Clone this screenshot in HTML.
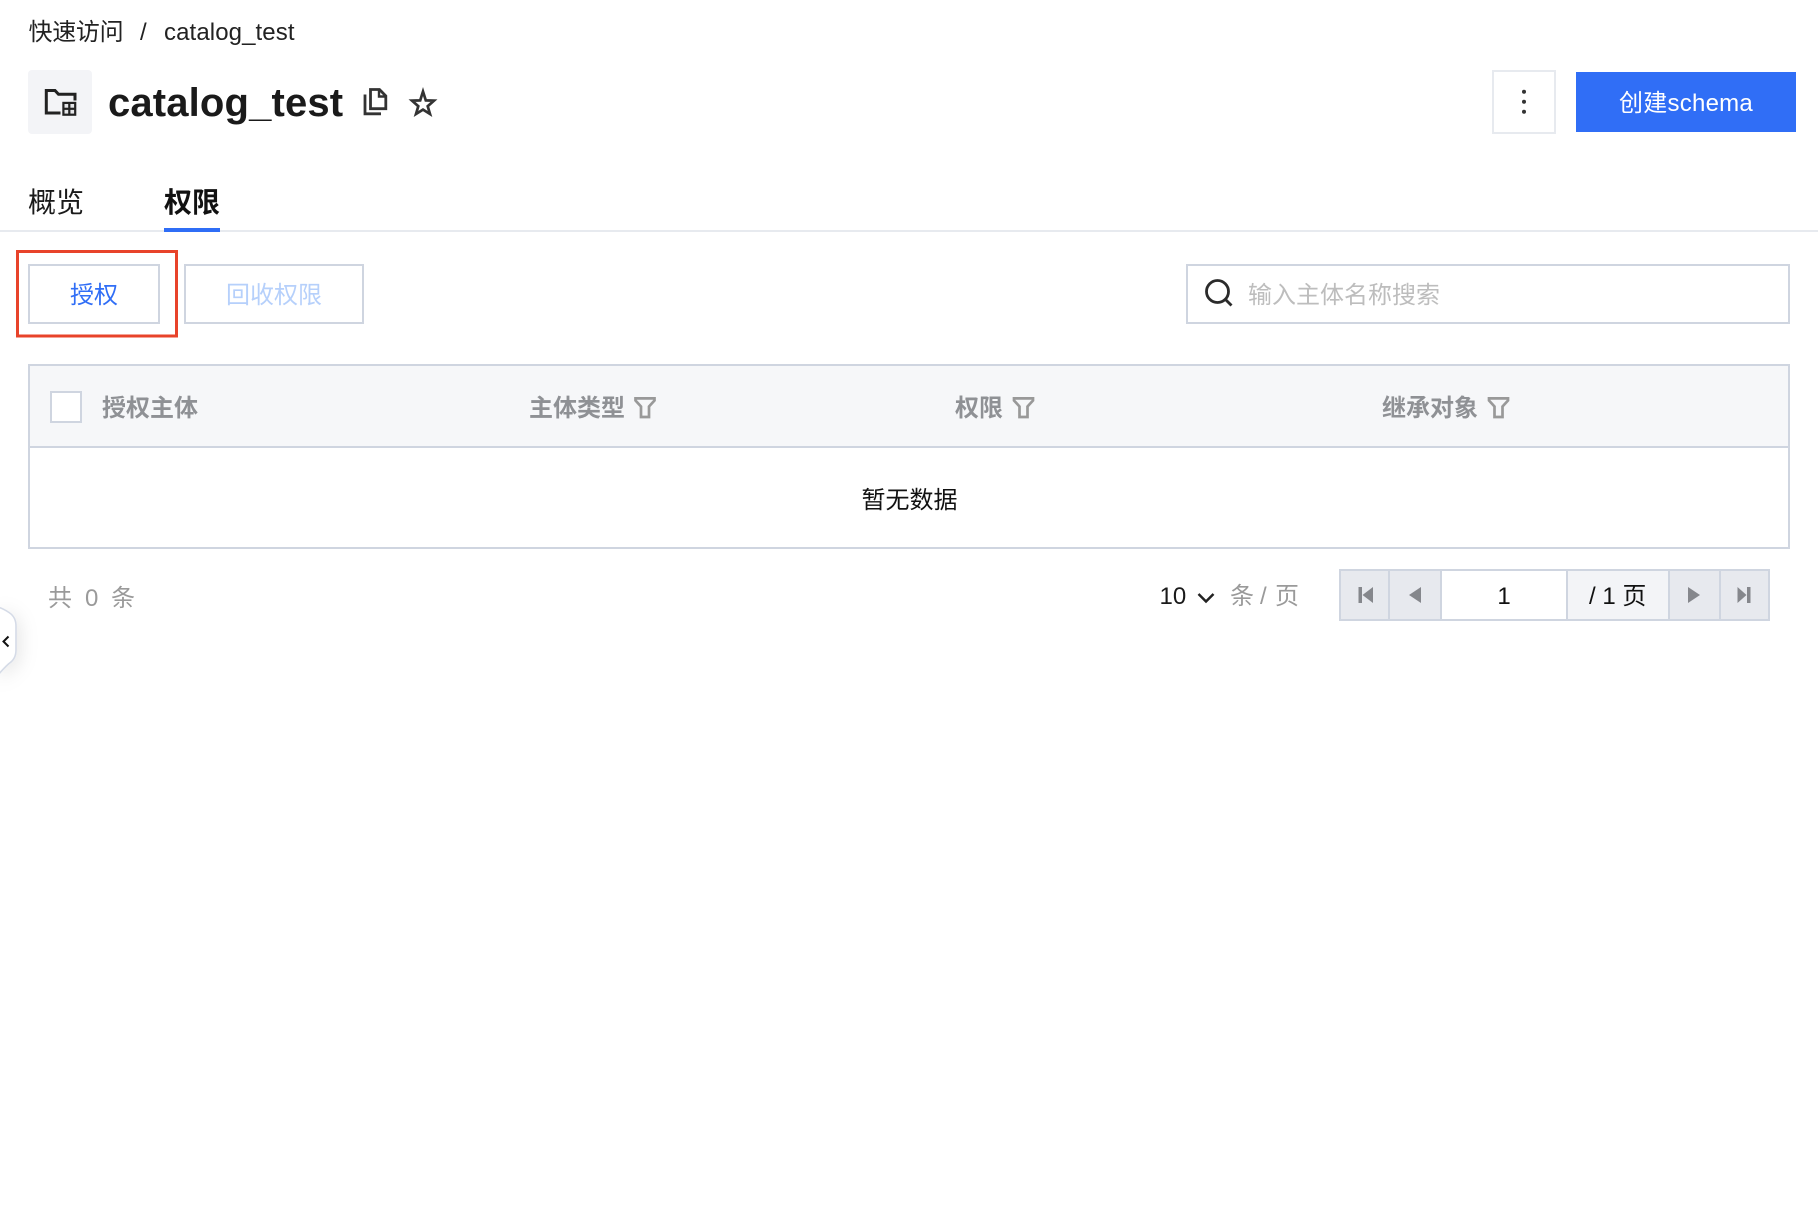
<!DOCTYPE html>
<html lang="zh-CN">
<head>
<meta charset="utf-8">
<title>catalog_test</title>
<style>
html,body{margin:0;padding:0;background:#fff;}
body{width:1818px;height:1232px;position:relative;overflow:hidden;font-family:"Liberation Sans","Noto Sans CJK SC",sans-serif;font-size:24px;color:#1a1a1a;}
.a{position:absolute;box-sizing:border-box;}
.t{position:absolute;white-space:nowrap;line-height:32px;height:32px;}
.b{font-weight:700;}
.g{color:#8f9195;}
.c{text-align:center;}
svg{position:absolute;overflow:visible;display:block;left:0;top:0;}
</style>
</head>
<body>
<!-- breadcrumb -->
<div class="t" style="left:28.5px;top:17px;color:#222;letter-spacing:-.3px;">快速访问</div>
<div class="t" style="left:140px;top:17px;color:#222;">/</div>
<div class="t" style="left:164px;top:17px;color:#222;letter-spacing:.1px;">catalog_test</div>

<!-- header -->
<div class="a" style="left:28px;top:70px;width:64px;height:64px;background:#f3f4f7;border-radius:4px;"></div>
<div class="t b" style="left:108px;top:80px;font-size:40px;line-height:46px;height:46px;color:#1a1a1a;letter-spacing:.15px;">catalog_test</div>

<!-- tabs -->
<div class="t" style="left:28px;top:185px;font-size:28px;line-height:36px;height:36px;color:#1a1a1a;">概览</div>
<div class="t b" style="left:164px;top:185px;font-size:28px;line-height:36px;height:36px;color:#111;">权限</div>
<div class="a" style="left:0;top:230px;width:1818px;height:2px;background:#e7eaef;"></div>
<div class="a" style="left:164px;top:228px;width:56px;height:4px;background:#2f6df6;"></div>

<!-- top-right buttons -->
<div class="a" style="left:1492px;top:70px;width:64px;height:64px;border:2px solid #e7eaef;"></div>
<div class="a" style="left:1576px;top:72px;width:220px;height:60px;background:#306ef6;"></div>
<div class="t c" style="left:1576px;top:88px;width:220px;color:#fff;letter-spacing:.25px;">创建schema</div>

<!-- action buttons -->
<div class="a" style="left:28px;top:264px;width:132px;height:60px;border:2px solid #cfd5e0;"></div>
<div class="t c" style="left:28px;top:280px;width:132px;color:#306ef6;">授权</div>
<div class="a" style="left:184px;top:264px;width:180px;height:60px;border:2px solid #cfd5e0;"></div>
<div class="t c" style="left:184px;top:280px;width:180px;color:#b6d0fb;">回收权限</div>

<!-- search -->
<div class="a" style="left:1186px;top:264px;width:604px;height:60px;border:2px solid #cfd5e0;"></div>
<div class="t" style="left:1248px;top:280px;color:#bdbdbd;">输入主体名称搜索</div>

<!-- table -->
<div class="a" style="left:28px;top:364px;width:1762px;height:185px;border:2px solid #cfd5e0;background:#fff;"></div>
<div class="a" style="left:30px;top:366px;width:1758px;height:80px;background:#f6f7f9;"></div>
<div class="a" style="left:30px;top:446px;width:1758px;height:2px;background:#cfd5e0;"></div>
<div class="a" style="left:50px;top:391px;width:32px;height:32px;border:2px solid #cfd5e0;background:#fff;"></div>
<div class="t b g" style="left:102px;top:393px;">授权主体</div>
<div class="t b g" style="left:529px;top:393px;">主体类型</div>
<div class="t b g" style="left:955px;top:393px;">权限</div>
<div class="t b g" style="left:1382px;top:393px;">继承对象</div>
<div class="t" style="left:861.5px;top:485px;color:#111;">暂无数据</div>

<!-- footer left -->
<div class="t" style="left:48px;top:583px;color:#9a9a9a;">共</div>
<div class="t" style="left:85px;top:583px;color:#9a9a9a;">0</div>
<div class="t" style="left:111px;top:583px;color:#9a9a9a;">条</div>

<!-- page size -->
<div class="t" style="left:1159.5px;top:581px;color:#1a1a1a;">10</div>
<div class="t" style="left:1230px;top:581px;color:#9a9a9a;">条</div>
<div class="t" style="left:1260px;top:581px;color:#9a9a9a;">/</div>
<div class="t" style="left:1275px;top:581px;color:#9a9a9a;">页</div>

<!-- pager -->
<div class="a" style="left:1339px;top:569px;width:431px;height:52px;border:2px solid #cfd5e0;background:#e7e9ee;"></div>
<div class="a" style="left:1388px;top:571px;width:2px;height:48px;background:#cfd5e0;"></div>
<div class="a" style="left:1440px;top:571px;width:128px;height:48px;background:#fff;border-left:2px solid #cfd5e0;border-right:2px solid #cfd5e0;"></div>
<div class="a" style="left:1568px;top:571px;width:101px;height:48px;background:#f3f4f7;"></div>
<div class="a" style="left:1668px;top:571px;width:2px;height:48px;background:#cfd5e0;"></div>
<div class="a" style="left:1719px;top:571px;width:2px;height:48px;background:#cfd5e0;"></div>
<div class="t c" style="left:1440px;top:581px;width:128px;color:#111;">1</div>
<div class="t" style="left:1589px;top:581px;color:#111;">/ 1 页</div>

<svg width="1818" height="1232" viewBox="0 0 1818 1232" xmlns="http://www.w3.org/2000/svg">
  <defs>
    <filter id="sh" x="-200%" y="-60%" width="500%" height="220%">
      <feDropShadow dx="3" dy="4" stdDeviation="9" flood-color="#000" flood-opacity="0.10"/>
    </filter>
  </defs>

  <!-- folder icon -->
  <path d="M75 100.5V94.3H58.5L55 90.5H46.3V113H60.5" fill="none" stroke="#222" stroke-width="3"/>
  <rect x="62.3" y="101.8" width="14" height="14" fill="#222"/>
  <rect x="64.5" y="104" width="3.7" height="3.7" fill="#e4e5e8"/>
  <rect x="70.4" y="104" width="3.7" height="3.7" fill="#e4e5e8"/>
  <rect x="64.5" y="109.9" width="3.7" height="3.7" fill="#e4e5e8"/>
  <rect x="70.4" y="109.9" width="3.7" height="3.7" fill="#e4e5e8"/>

  <!-- copy icon -->
  <path d="M370.5 89.5H379.5L385.8 96V108.7H370.5Z" fill="none" stroke="#333" stroke-width="2.8"/>
  <path d="M379 89.5V96.5H385.5" fill="none" stroke="#333" stroke-width="2.4"/>
  <path d="M365 94.5V113.8H381" fill="none" stroke="#333" stroke-width="2.8"/>

  <!-- star icon -->
  <path d="M423 91.5L425.8 100.4L434 100.6L427.7 106.2L430 114L423 109.6L416 114L418.3 106.2L412 100.6L420.2 100.4Z" fill="none" stroke="#333" stroke-width="2.7" stroke-linejoin="miter"/>

  <!-- kebab -->
  <circle cx="1524" cy="91.8" r="2" fill="#333"/>
  <circle cx="1524" cy="101.8" r="2" fill="#333"/>
  <circle cx="1524" cy="111.8" r="2" fill="#333"/>

  <!-- search icon -->
  <circle cx="1217.5" cy="291.5" r="11" fill="none" stroke="#2b2b2b" stroke-width="2.8"/>
  <path d="M1225 299L1231.5 305.5" stroke="#2b2b2b" stroke-width="2.8" fill="none"/>

  <!-- filters -->
  <g fill="none" stroke="#999" stroke-width="2.7">
    <path d="M635.5 398.4H654.5V400.5L649 406.5V417H641V406.5L635.5 400.5Z"/>
    <path d="M1014 398.4H1033V400.5L1027.5 406.5V417H1019.5V406.5L1014 400.5Z"/>
    <path d="M1489 398.4H1508V400.5L1502.5 406.5V417H1494.5V406.5L1489 400.5Z"/>
  </g>

  <!-- page-size chevron -->
  <path d="M1198.5 594L1206 601.5L1213.5 594" fill="none" stroke="#222" stroke-width="2.5"/>

  <!-- pager icons -->
  <g fill="#85878c">
    <rect x="1358.5" y="587" width="3.5" height="16"/>
    <path d="M1373 587V603L1362.5 595Z"/>
    <path d="M1421 587V603L1409 595Z"/>
    <path d="M1688 587V603L1700 595Z"/>
    <path d="M1737.5 587V603L1746.5 595Z"/>
    <rect x="1747" y="587" width="3.5" height="16"/>
  </g>

  <!-- side handle -->
  <path d="M-2 607Q4 609 9 612.5Q16 617 16 626V650Q16 659 9 663.5Q4 668 -2 675Z" fill="#fff" stroke="#d5dbe7" stroke-width="1.6" filter="url(#sh)"/>
  <path d="M8.5 636.5L3.5 641.5L8.5 646.5" fill="none" stroke="#111" stroke-width="2"/>

  <!-- red annotation -->
  <path d="M17.5 251.5L176.5 251.5L176.5 336L17.5 336Z" fill="none" stroke="#e8432a" stroke-width="3"/>
</svg>
</body>
</html>
